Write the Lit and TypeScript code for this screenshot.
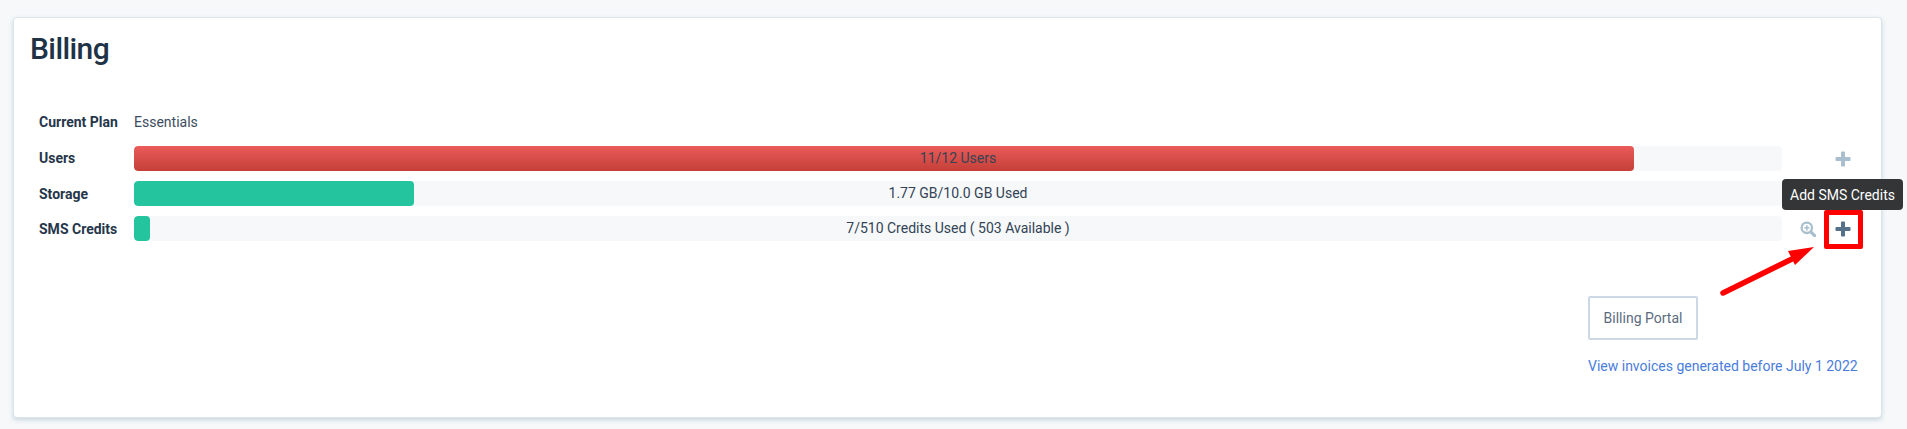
import { LitElement, html, css, svg } from "lit";
import { customElement } from "lit/decorators.js";

const plus = (cls: string) => html`<svg class="ic ${cls}" viewBox="0 0 16 16" width="16" height="16"><path d="M6 1.2a.8.8 0 0 1 .8-.7h2.4a.8.8 0 0 1 .8.7V6h4.800a.8.8 0 0 1 .7.8v2.400a.8.8 0 0 1-.7.8H10v4.800a.8.8 0 0 1-.8.7H6.800a.8.8 0 0 1-.8-.7V10H1.200a.8.8 0 0 1-.7-.8V6.800a.8.8 0 0 1 .7-.8H6z" fill="currentColor"/></svg>`;
const zoomIcon = html`<svg class="ic light" viewBox="0 0 16 16" width="16" height="16" fill="none" stroke="currentColor"><circle cx="6.800" cy="6.800" r="5.200" stroke-width="2.300"/><path d="M10.800 10.800l3.800 3.800" stroke-width="3.200" stroke-linecap="round"/><path d="M4.200 6.800h5.200M6.800 4.200v5.200" stroke-width="1.600"/></svg>`;

@customElement("app-root")
export class AppRoot extends LitElement {
  static styles = css`
    :host { display: block; height: 429px; background: #f6f8fa; font-family: Roboto, "Liberation Sans", sans-serif; font-size: 14px; color: #2a3a4c; position: relative; overflow: hidden; padding: 17px 25px 11px 13px; box-sizing: border-box; }
    .card { height: 401px; box-sizing: border-box; background: #fff; border: 1px solid #dbe5ea; border-radius: 4px; box-shadow: 0 2px 4px rgba(170,195,205,.6); padding: 11px 24px 0 16px; display: flex; flex-direction: column; }
    h1 { margin: 0; font-size: 30px; font-weight: 500; line-height: 40px; color: #1f3347; letter-spacing: -0.6px; }
    .rows { margin-top: 40px; display: flex; flex-direction: column; gap: 10px; padding-left: 9px; }
    .row { display: grid; grid-template-columns: 95px 1648px 1fr; align-items: center; height: 25px; }
    .row.plan { margin-bottom: 2px; }
    .label { font-weight: 700; color: #26364a; white-space: nowrap; }
    .label.up { margin-bottom: 2px; }
    .plain { color: #3c4c5e; }
    .bar { position: relative; height: 25px; background: #f6f8fa; border-radius: 4px; overflow: hidden; text-align: center; line-height: 25px; }
    .fill { position: absolute; left: 0; top: 0; bottom: 0; border-radius: 4px; }
    .red { background: linear-gradient(#ea5b59, #c53f38); }
    .green { background: #24c49e; }
    .bar span { position: relative; color: #334355; }
    .actions { display: flex; align-items: center; height: 25px; position: relative; }
    .ic { display: block; flex: none; }
    .light { color: #a9bfce; }
    .dark { color: #56728a; }
    .a-plus { margin-left: 53px; }
    .a-zoom { margin-left: 18px; margin-right: 19px; }
    .footer { margin-top: 55px; align-self: flex-end; width: 269px; display: flex; flex-direction: column; align-items: flex-start; }
    .btn { width: 110px; height: 44px; box-sizing: border-box; border: 2px solid #cdd8e6; border-radius: 2px; background: #fff; color: #5b6b80; font: inherit; display: flex; align-items: center; justify-content: center; padding: 0; }
    .link { margin-top: 17px; color: #4a7ddb; text-decoration: none; line-height: 18px; white-space: nowrap; }
    .tip { position: absolute; left: 1782px; top: 179px; width: 121px; height: 31px; box-sizing: border-box; background: #333536; color: #fff; border-radius: 4px; display: flex; align-items: center; justify-content: center; white-space: nowrap; }
    .mark { position: absolute; left: 1824px; top: 210px; width: 39px; height: 39px; box-sizing: border-box; border: 5px solid #f00; border-radius: 2px; }
    .arrow { position: absolute; left: 1710px; top: 240px; }
  `;
  render() {
    return html`
      <div class="card">
        <h1>Billing</h1>
        <div class="rows">
          <div class="row plan"><div class="label">Current Plan</div><div class="plain">Essentials</div></div>
          <div class="row"><div class="label up">Users</div><div class="bar"><div class="fill red" style="width:91%"></div><span>11/12 Users</span></div><div class="actions">${plus("light a-plus")}</div></div>
          <div class="row"><div class="label">Storage</div><div class="bar"><div class="fill green" style="width:17%"></div><span>1.77 GB/10.0 GB Used</span></div><div class="actions"></div></div>
          <div class="row"><div class="label">SMS Credits</div><div class="bar"><div class="fill green" style="width:16px"></div><span>7/510 Credits Used ( 503 Available )</span></div><div class="actions"><span class="a-zoom">${zoomIcon}</span>${plus("dark")}</div></div>
        </div>
        <div class="footer">
          <button class="btn">Billing Portal</button>
          <a class="link" href="#">View invoices generated before July 1 2022</a>
        </div>
      </div>
      <div class="tip">Add SMS Credits</div>
      <div class="mark"></div>
      <svg class="arrow" width="110" height="60" viewBox="0 0 110 60">${svg`<path d="M13 53L84 18" stroke="#f00" stroke-width="5.500" stroke-linecap="round"/><path d="M104 7L78 11l7 14z" fill="#f00"/>`}</svg>
    `;
  }
}
